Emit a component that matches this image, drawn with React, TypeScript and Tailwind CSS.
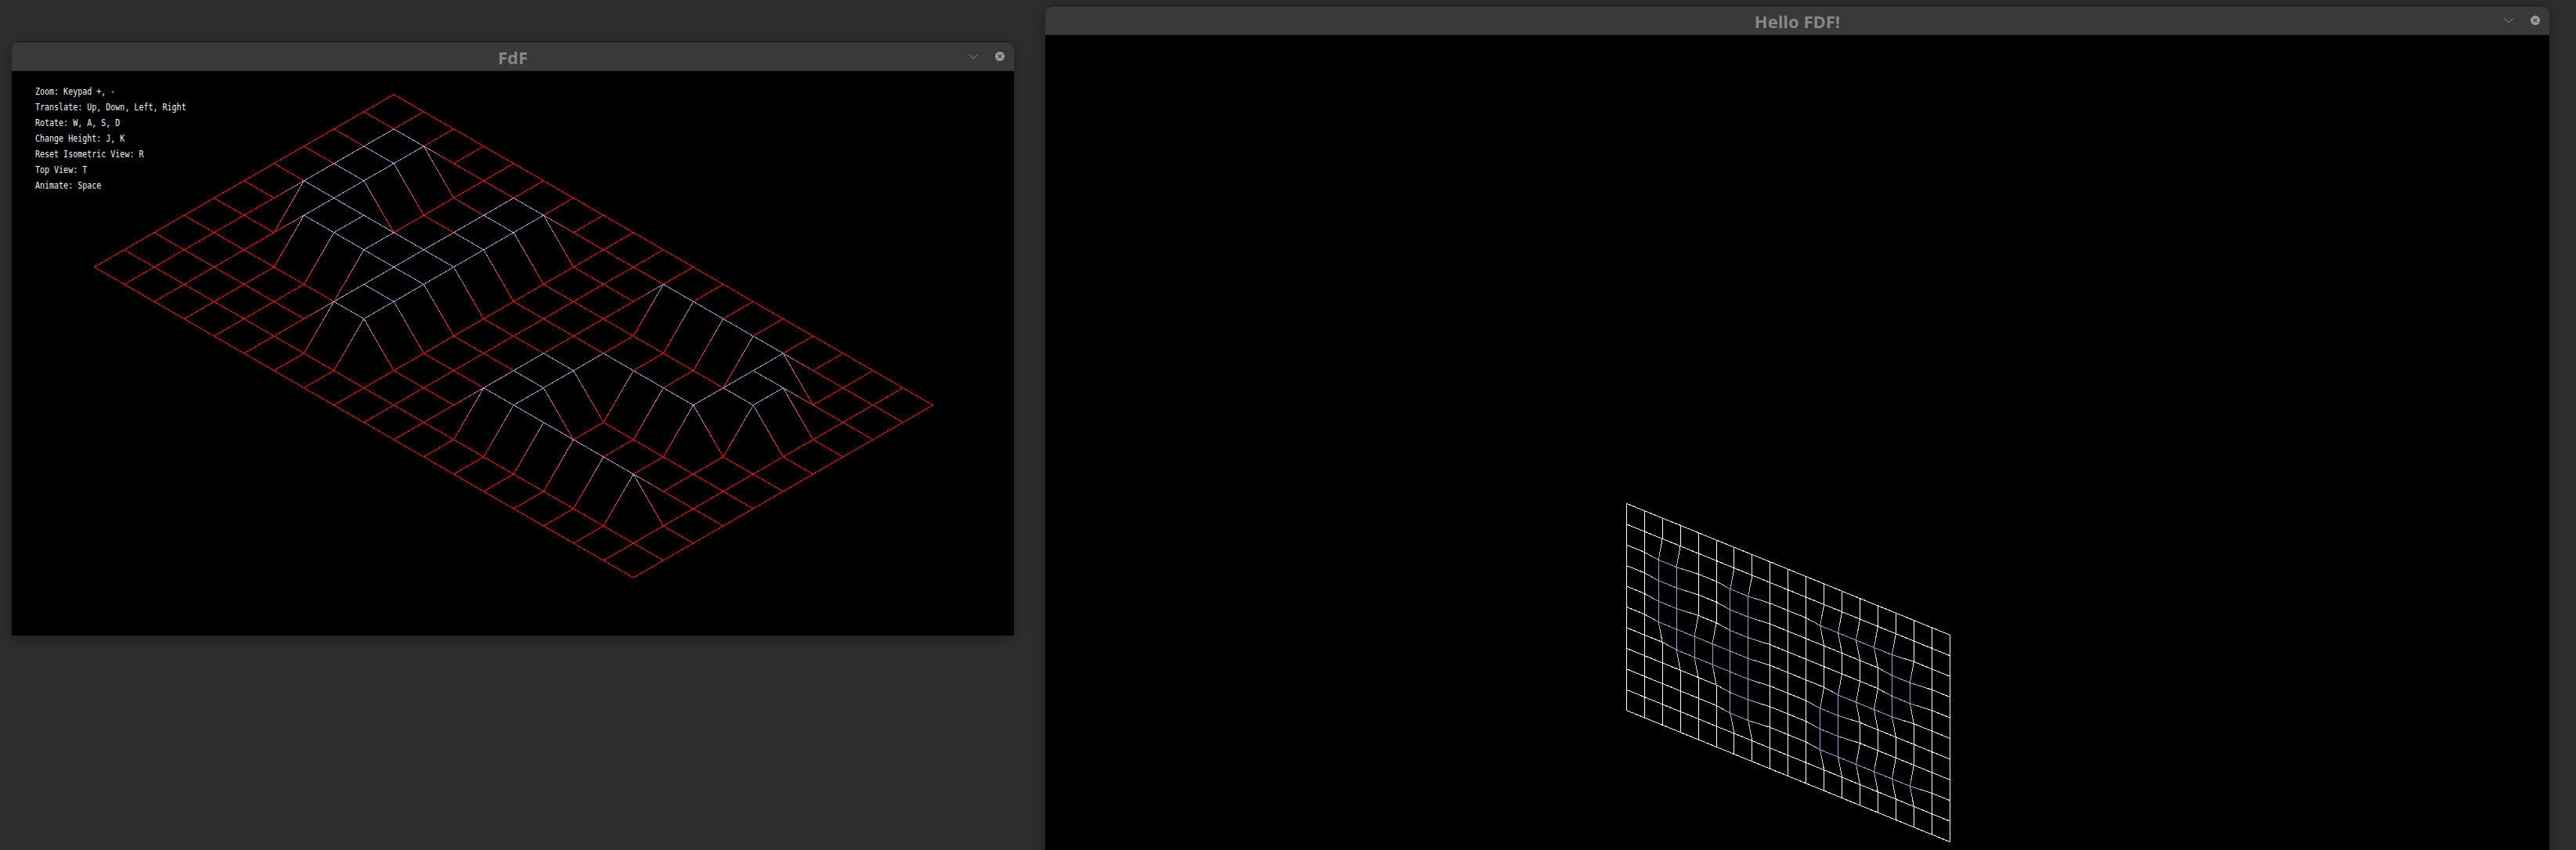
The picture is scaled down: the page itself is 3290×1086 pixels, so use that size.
import React from 'react';

// 42.fdf height map
const MAP = [
  [0, 0, 0, 0, 0, 0, 0, 0, 0, 0, 0, 0, 0, 0, 0, 0, 0, 0, 0],
  [0, 0, 0, 0, 0, 0, 0, 0, 0, 0, 0, 0, 0, 0, 0, 0, 0, 0, 0],
  [0, 0, 1, 1, 0, 0, 1, 1, 0, 0, 0, 1, 1, 1, 1, 1, 0, 0, 0],
  [0, 0, 1, 1, 0, 0, 1, 1, 0, 0, 0, 0, 0, 0, 0, 1, 1, 0, 0],
  [0, 0, 1, 1, 0, 0, 1, 1, 0, 0, 0, 0, 0, 0, 0, 1, 1, 0, 0],
  [0, 0, 1, 1, 1, 1, 1, 1, 0, 0, 0, 0, 1, 1, 1, 1, 0, 0, 0],
  [0, 0, 0, 1, 1, 1, 1, 1, 0, 0, 0, 1, 1, 0, 0, 0, 0, 0, 0],
  [0, 0, 0, 0, 0, 0, 1, 1, 0, 0, 0, 1, 1, 0, 0, 0, 0, 0, 0],
  [0, 0, 0, 0, 0, 0, 1, 1, 0, 0, 0, 1, 1, 1, 1, 1, 1, 0, 0],
  [0, 0, 0, 0, 0, 0, 0, 0, 0, 0, 0, 0, 0, 0, 0, 0, 0, 0, 0],
  [0, 0, 0, 0, 0, 0, 0, 0, 0, 0, 0, 0, 0, 0, 0, 0, 0, 0, 0],
];

type Project = (row: number, col: number, z: number) => [number, number];

const Wireframe: React.FC<{ id: string; project: Project; low: string; high: string }> = ({ id, project, low, high }) => {
  const defs: React.ReactNode[] = [];
  const lines: React.ReactNode[] = [];

  const edge = (r1: number, c1: number, r2: number, c2: number) => {
    const a = MAP[r1][c1];
    const b = MAP[r2][c2];
    const [x1, y1] = project(r1, c1, a);
    const [x2, y2] = project(r2, c2, b);
    const key = `${id}-${r1}-${c1}-${r2}-${c2}`;
    let stroke = a ? high : low;
    if (a !== b) {
      defs.push(
        <linearGradient key={key} id={key} gradientUnits="userSpaceOnUse" x1={x1} y1={y1} x2={x2} y2={y2}>
          <stop offset="0" stopColor={a ? high : low} />
          <stop offset="1" stopColor={b ? high : low} />
        </linearGradient>
      );
      stroke = `url(#${key})`;
    }
    lines.push(<line key={key} x1={x1} y1={y1} x2={x2} y2={y2} stroke={stroke} strokeWidth={1} />);
  };

  MAP.forEach((row, r) => {
    row.forEach((_, c) => {
      if (c < row.length - 1) edge(r, c, r, c + 1);
      if (r < MAP.length - 1) edge(r, c, r + 1, c);
    });
  });

  return (
    <svg className="absolute inset-0 w-full h-full" shapeRendering="crispEdges">
      <defs>{defs}</defs>
      {lines}
    </svg>
  );
};

const isoProject: Project = (r, c, z) => [488 + (c - r) * 38.25, 29.7 + (c + r) * 22.05 - z * 44.1];
const skewProject: Project = (r, c, z) => [742.3 + c * 22.94 - z * 5, 598.3 + c * 9.33 + r * 26.43 + z * 0.5];

const HELP = [
  'Zoom: Keypad +, -',
  'Translate: Up, Down, Left, Right',
  'Rotate: W, A, S, D',
  'Change Height: J, K',
  'Reset Isometric View: R',
  'Top View: T',
  'Animate: Space',
];

const WindowControls = () => (
  <div className="flex items-center justify-end gap-[22px] pr-[12px]">
    <svg width="12" height="7" viewBox="0 0 12 7" fill="none">
      <path d="M0.5 0.5 L6 6 L11.5 0.5" stroke="#8a8a8a" strokeWidth="1" />
    </svg>
    <svg width="12" height="12" viewBox="0 0 12 12">
      <circle cx="6" cy="6" r="6" fill="#9c9c9c" />
      <path d="M3.6 3.6 L8.4 8.4 M8.4 3.6 L3.6 8.4" stroke="#3a3a3a" strokeWidth="1.3" />
    </svg>
  </div>
);

const Window: React.FC<{ title: string; className: string; children: React.ReactNode }> = ({ title, className, children }) => (
  <div className={`flex flex-col shrink-0 shadow-[0_4px_18px_rgba(0,0,0,0.35)] ${className}`}>
    <div className="grid grid-cols-[1fr_auto_1fr] items-center h-[38px] rounded-t-[10px] bg-[#393939] border-t border-t-[#1c1c1c] border-b border-b-[#272727] box-border">
      <div />
      <div className="pt-[1px] text-[22px] leading-none font-bold text-[#868686] font-['Open_Sans',sans-serif]">{title}</div>
      <WindowControls />
    </div>
    {children}
  </div>
);

export default function App() {
  return (
    <div className="flex items-start h-[1086px] w-[3290px] overflow-hidden bg-[#2e2e2e]">
      <Window title="FdF" className="w-[1280px] ml-[15px] mt-[53px]">
        <div className="relative h-[721px] bg-black">
          <Wireframe id="iso" project={isoProject} low="#ff0000" high="#b394cc" />
          <div className="relative flex flex-col pt-[17px] pl-[30px] text-[10px] leading-[20px] text-[#f2f2f2] font-['DejaVu_Sans_Mono',monospace]">
            {HELP.map((line) => (
              <div key={line} className="whitespace-pre scale-y-[1.14]">{line}</div>
            ))}
          </div>
        </div>
      </Window>
      <Window title="Hello FDF!" className="w-[1921px] ml-[40px] mt-[7px]">
        <div className="relative h-[1080px] bg-black">
          <Wireframe id="skew" project={skewProject} low="#ffffff" high="#b394cc" />
        </div>
      </Window>
    </div>
  );
}
